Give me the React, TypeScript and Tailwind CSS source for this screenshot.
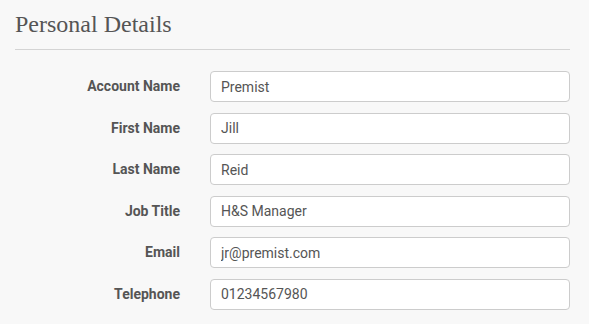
import type { FC } from "react";

const fields = [
  { label: "Account Name", value: "Premist" },
  { label: "First Name", value: "Jill" },
  { label: "Last Name", value: "Reid" },
  { label: "Job Title", value: "H&S Manager" },
  { label: "Email", value: "jr@premist.com" },
  { label: "Telephone", value: "01234567980" },
];

const App: FC = () => {
  return (
    <div className="w-[589px] h-[324px] bg-[#f8f8f8] overflow-hidden font-['Roboto',sans-serif]">
      <div className="pl-[15px] w-[570px]">
        <h2 className="pt-[9px] text-[24px] leading-[30px] font-['Liberation_Serif',serif] text-[#555] font-normal">
          Personal Details
        </h2>
        <hr className="mt-[10px] border-0 border-t border-[#d4d4d4]" />
        <form className="mt-[21px] flex flex-col gap-[10.6px]">
          {fields.map((f) => (
            <div key={f.label} className="flex items-center">
              <label className="w-[165px] text-right text-[14px] font-bold text-[#555]">
                {f.label}
              </label>
              <input
                type="text"
                defaultValue={f.value}
                className="ml-[30px] w-[360px] h-[31px] px-[10px] bg-white border border-[#ccc] rounded-[4px] text-[14px] text-[#555] outline-none"
              />
            </div>
          ))}
        </form>
      </div>
    </div>
  );
};

export default App;
